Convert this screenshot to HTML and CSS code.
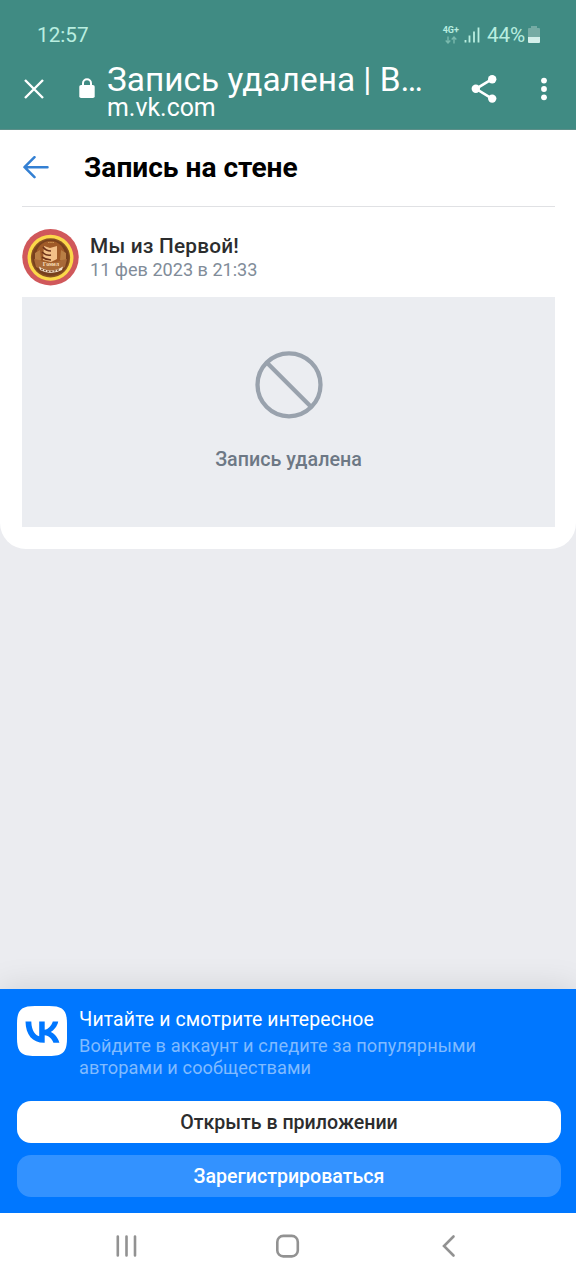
FILE: index.html
```html
<!DOCTYPE html>
<html lang="ru">
<head>
<meta charset="utf-8">
<meta name="viewport" content="width=device-width">
<title>Запись удалена | ВКонтакте</title>
<link rel="stylesheet" href="styles.css">
</head>
<body>
<header class="browser">
  <div class="status">
    <span class="clock">12:57</span>
    <div class="indicators">
      <div class="network">
        <span>4G+</span>
        <svg width="12" height="8" viewBox="0 0 12 8"><path d="M3 0.5V7M0.7 4.6L3 7L5.3 4.6M9 7.5V1M6.7 3.4L9 1L11.3 3.4"/></svg>
      </div>
      <svg class="signal" width="16" height="16" viewBox="0 0 16 16"><path d="M1.5 13V15.5M5.5 8.5V15.5M10 4.5V15.5M14.5 0.5V15.5"/></svg>
      <span class="percent">44%</span>
      <svg class="battery" width="12" height="18" viewBox="0 0 12 18"><path class="battery-empty" d="M3 0h6v2h2q1 0 1 1v8H0V3q0-1 1-1h2z"/><path class="battery-full" d="M0 11h12v5q0 1-1 1H1q-1 0-1-1z"/></svg>
    </div>
  </div>
  <div class="toolbar">
    <svg class="close" width="22" height="22" viewBox="0 0 22 22"><path d="M2 2L20 20M20 2L2 20"/></svg>
    <svg class="lock" width="16" height="21" viewBox="0 0 16 21"><path d="M4 8V5.2a4 4 0 0 1 8 0V8"/><rect x="0.3" y="7" width="15.4" height="13" rx="1.8"/></svg>
    <div class="address">
      <div class="page-title">Запись удалена | В…</div>
      <div class="page-url">m.vk.com</div>
    </div>
    <svg class="share" width="28" height="30" viewBox="0 0 28 30"><path d="M22 5.2L6 14.8L22 24.6"/><circle cx="22.2" cy="5.2" r="4.2"/><circle cx="5.8" cy="14.8" r="4.2"/><circle cx="22.2" cy="24.6" r="4.2"/></svg>
    <svg class="menu" width="8" height="24" viewBox="0 0 8 24"><circle cx="4" cy="3.6" r="2.9"/><circle cx="4" cy="12" r="2.9"/><circle cx="4" cy="20.3" r="2.9"/></svg>
  </div>
</header>
<main class="sheet">
  <div class="heading">
    <svg class="back" width="27" height="24" viewBox="0 0 27 24"><path d="M12.5 1.2L2.5 11.2L12.5 21.2M2.7 11.2H25.5"/></svg>
    <h1>Запись на стене</h1>
  </div>
  <div class="author">
    <svg class="avatar" width="57" height="57" viewBox="0 0 57 57">
      <circle cx="28.5" cy="28.3" r="28.2" fill="#d0585b"/>
      <circle cx="28.5" cy="28.8" r="23" fill="#fbd849"/>
      <circle cx="28.5" cy="28.8" r="19.6" fill="#8a5222"/>
      <circle cx="28.5" cy="28.8" r="18.2" fill="#77401d"/>
      <circle cx="28.5" cy="26.5" r="14.5" fill="#a05a28"/>
      <path d="M13 24l5-3 1 10-6 3zM44 24l-5-3-1 10 6 3z" fill="#b97f45"/>
      <path d="M22 17l6 2 7-2v13l-6 3-8-2z" fill="#f3c088"/>
      <path d="M21 18q3 4 8 4M20 23q4 4 9 3M20 28q4 3 9 3" fill="none" stroke="#6d3219" stroke-width="1.6"/>
      <path d="M12 30l5 1q11 6 23 0l5-1-2 8q-14 8-29 0z" fill="#a96a38"/>
      <path d="M17 37.5q11.500 8 24 0l-1 3.500q-11.500 6-22 0z" fill="#f2e0c8"/>
      <path d="M19 40q9.500 5 19 0" fill="none" stroke="#805236" stroke-width="1.3" stroke-dasharray="2 1.3"/>
      <text class="avatar-name" x="29" y="36.8">Гомел</text>
      <path d="M26 13.500h6" stroke="#ca924f" stroke-width="1.2" stroke-dasharray="1.6 .6"/>
    </svg>
    <div class="author-text">
      <div class="name">Мы из Первой!</div>
      <div class="date">11 фев 2023 в 21:33</div>
    </div>
  </div>
  <section class="deleted">
    <svg width="70" height="70" viewBox="0 0 70 70"><circle cx="35" cy="34.8" r="31.5"/><path d="M12.5 12.3L57.5 57.3"/></svg>
    <div class="deleted-text">Запись удалена</div>
  </section>
</main>
<aside class="banner">
  <div class="promo">
    <svg class="vk" width="50" height="50" viewBox="0 0 50 50"><path fill="#fff" d="M0 18C0 4 4 0 18 0H32C46 0 50 4 50 18V32C50 46 46 50 32 50H18C4 50 0 46 0 32Z"/><path fill="#07f" d="M27 36.8C15.4 36.8 8.8 28.8 8.5 15.5H14.3C14.5 25.2 18.8 29.4 22.2 30.2V15.5H27.7V23.8C31.1 23.4 34.6 19.7 35.8 15.5H41.2C40.3 20.7 36.5 24.4 33.8 26C36.5 27.3 40.8 30.6 42.4 36.8H36.4C35.1 32.8 31.9 29.7 27.7 29.3V36.8Z"/></svg>
    <div>
      <div class="promo-title">Читайте и смотрите интересное</div>
      <div class="promo-text">Войдите в аккаунт и следите за популярными<br>авторами и сообществами</div>
    </div>
  </div>
  <button class="button open">Открыть в приложении</button>
  <button class="button register">Зарегистрироваться</button>
</aside>
<nav class="system-nav">
  <svg width="24" height="24" viewBox="0 0 24 24"><path d="M2.8 2.5V21.5M11.5 2.5V21.5M20 2.5V21.5"/></svg>
  <svg width="26" height="26" viewBox="0 0 26 26"><rect x="2.3" y="2.9" width="20.5" height="20.5" rx="6"/></svg>
  <svg width="24" height="24" viewBox="0 0 24 24"><path d="M16.5 2.500L7 12L16.5 21.500"/></svg>
</nav>
</body>
</html>
```

FILE: styles.css
```css
* { box-sizing: border-box; }
body {
  margin: 0;
  height: 1280px;
  display: flex;
  flex-direction: column;
  background: #ebecf0;
  font-family: Roboto, "Noto Sans", sans-serif;
  overflow: hidden;
}
svg { display: block; flex: none; }
.browser {
  height: 130px;
  background: #408b83;
  border-bottom: 1px solid #5d8f89;
}
.status {
  height: 58px;
  padding: 12px 36px 0 37px;
  display: flex;
  justify-content: space-between;
  align-items: center;
  color: #b9eee0;
  font-size: 20.7px;
  line-height: 24px;
}
.indicators { display: flex; align-items: center; }
.network { display: flex; flex-direction: column; align-items: center; gap: 1px; margin-right: 5px; font-size: 9px; line-height: 9px; font-weight: 700; }
.network svg { fill: none; stroke: #79b9ad; stroke-width: 1.4; }
.signal { margin-right: 7px; stroke: #b9eee0; stroke-width: 1.8; }
.percent { margin-right: 3px; letter-spacing: -.1px; }
.battery-empty { fill: #75aba4; }
.battery-full { fill: #d3efea; }
.toolbar { display: flex; align-items: flex-start; height: 71px; padding: 4px 28px 0 23px; color: #fff; }
.close { margin: 16px 34px 0 0; stroke: #fff; stroke-width: 2.4; }
.lock { margin: 16px 12px 0 0; fill: #fff; }
.lock path { fill: none; stroke: #fff; stroke-width: 2; }
.address { flex: 1; white-space: nowrap; }
.page-title { font-size: 33.4px; line-height: 35px; }
.page-url { margin-top: -1px; font-size: 24.9px; line-height: 24px; }
.share { margin: 12px 42px 0 0; fill: #fff; }
.share path { fill: none; stroke: #fff; stroke-width: 2.6; }
.menu { margin-top: 15px; fill: #fff; }
.sheet {
  height: 419px;
  padding: 0 21px 0 22px;
  border-radius: 0 0 26px 26px;
  background: #fff;
}
.heading { display: flex; align-items: center; height: 77px; padding-bottom: 1px; border-bottom: 1px solid #e0e1e4; }
.back { margin-right: 35px; fill: none; stroke: #3480d3; stroke-width: 2.5; stroke-linecap: round; stroke-linejoin: round; }
h1 { margin: 0; font-size: 28.1px; line-height: 34px; font-weight: 700; color: #000; }
.author { display: flex; height: 90px; padding-top: 22px; }
.avatar { margin-right: 11px; }
.avatar-name { font: 700 6px "Liberation Serif", serif; text-anchor: middle; fill: #f9dfb9; }
.name { padding-top: 5px; color: #2c2d2e; font-size: 20.8px; line-height: 24px; font-weight: 500; letter-spacing: .2px; }
.date { color: #818c99; font-size: 18.1px; line-height: 24px; }
.deleted { height: 230px; display: flex; flex-direction: column; align-items: center; padding-top: 53px; background: #ebedf1; }
.deleted svg { fill: none; stroke: #99a2ad; stroke-width: 4.3; }
.deleted-text { margin-top: 28px; color: #6d7885; font-size: 19.7px; line-height: 24px; font-weight: 500; }
.banner { height: 224px; margin-top: auto; padding: 17px 15px 0 17px; display: flex; flex-direction: column; background: #07f; box-shadow: 0 0 32px rgba(0,0,0,.12); }
.promo { display: flex; gap: 12px; height: 95px; }
.promo-title { padding-top: 1px; color: #fff; font-size: 19.4px; line-height: 26px; letter-spacing: .15px; }
.promo-text { color: #80bbff; font-size: 18.2px; line-height: 22px; margin-top: 2px; letter-spacing: .09px; white-space: nowrap; }
.button { flex: none; height: 42px; padding: 1px 0 0; border: 0; border-radius: 14px; font: 500 19.6px/41px Roboto, sans-serif; }
.open { background: #fff; color: #2c2d2e; }
.register { margin-top: 12px; background: #3392ff; color: #fff; }
.system-nav { display: flex; align-items: center; justify-content: space-between; flex: none; height: 67px; padding: 0 115px 1px; background: #fff; }
.system-nav svg { fill: none; stroke: #929292; stroke-width: 2.6; stroke-linecap: round; }
```
